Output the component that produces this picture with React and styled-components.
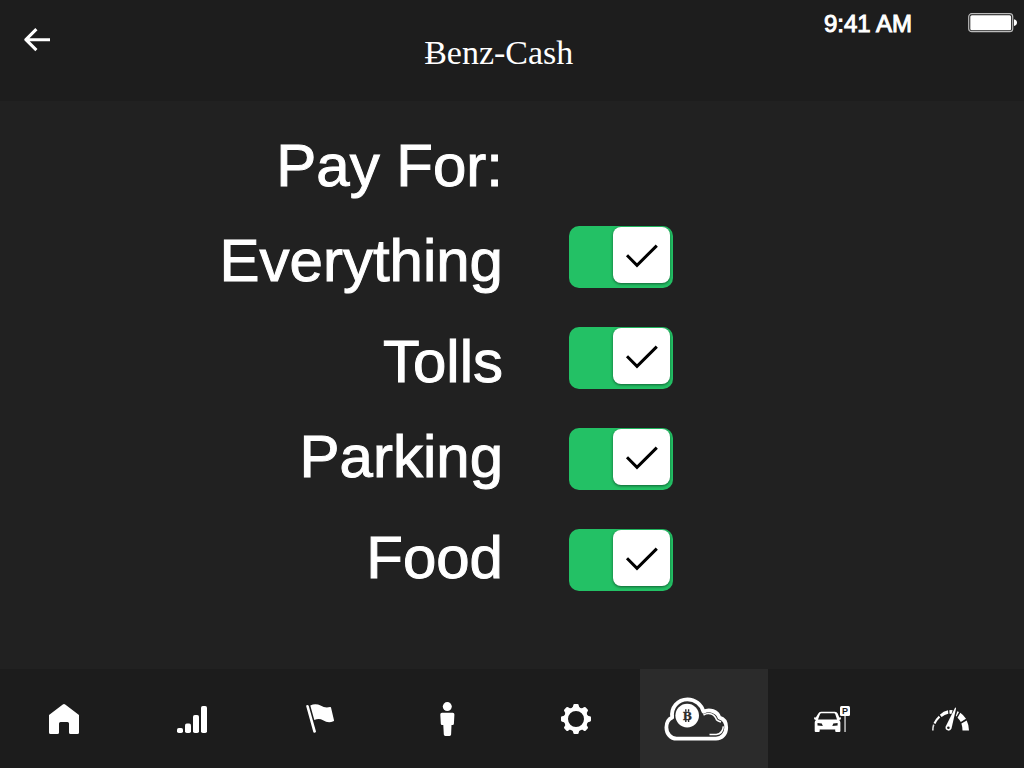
import React from "react";
import styled, { createGlobalStyle } from "styled-components";

const GlobalStyle = createGlobalStyle`
  *, *::before, *::after { box-sizing: border-box; }
  body {
    margin: 0;
    background: #212121;
    color: #fff;
    font-family: "Liberation Sans", Arial, sans-serif;
  }
`;

const Screen = styled.div`
  min-height: 100vh;
  display: flex;
  flex-direction: column;
`;

const Header = styled.header`
  display: grid;
  grid-template-columns: 16fr auto 17fr;
  height: 101px;
  background: #1d1d1d;
`;

const BackButton = styled.button`
  justify-self: start;
  align-self: start;
  margin: 28px 0 0 24px;
  padding: 0;
  border: 0;
  background: none;
  color: inherit;
  cursor: pointer;

  svg { display: block; }
`;

const Title = styled.h1`
  margin: 0;
  padding-top: 34px;
  font: 400 34px/38px "Liberation Serif", "Times New Roman", serif;
`;

const Status = styled.div`
  display: flex;
  justify-content: flex-end;
  align-items: flex-start;
  gap: 56px;
  padding: 10px 7px 0 0;

  svg { display: block; margin-top: 2px; }
`;

const Clock = styled.time`
  font-size: 24px;
  line-height: 28px;
  -webkit-text-stroke: 1px #fff;
  paint-order: stroke;
`;

const Main = styled.main`
  flex: 1;
  display: grid;
  grid-template-columns: 1fr 1fr;
  align-items: start;
`;

const Labels = styled.div`
  display: flex;
  flex-direction: column;
  gap: 6px;
  padding: 17px 9px 0 0;
`;

const LabelGroup = styled.div`
  display: flex;
  flex-direction: column;
  align-items: flex-end;
  font-size: 60px;
  line-height: 95px;
  -webkit-text-stroke: 1px #fff;
`;

const Heading = styled.h2`
  margin: 0;
  font: inherit;
`;

const Switches = styled.div`
  display: flex;
  flex-direction: column;
  align-items: flex-start;
  gap: 39px;
  padding: 125px 0 39px 57px;
`;

const Switch = styled.span`
  position: relative;
  width: 104px;
  height: 62px;
`;

const Knob = styled.span`
  position: absolute;
  top: 1px;
  left: 3px;
  width: 57px;
  height: 56px;
  border-radius: 8px;
  background: #fff;
  box-shadow: 0 1px 3px rgba(0, 0, 0, 0.5);
  pointer-events: none;

  svg { display: block; visibility: hidden; }
`;

const SwitchInput = styled.input`
  appearance: none;
  display: block;
  width: 100%;
  height: 100%;
  margin: 0;
  border-radius: 10px;
  background: #555;
  cursor: pointer;

  &:checked { background: #23c165; }
  &:checked + ${Knob} { left: 44px; }
  &:checked + ${Knob} svg { visibility: visible; }
`;

const TabBar = styled.nav`
  display: grid;
  grid-template-columns: repeat(8, 1fr);
  height: 99px;
  background: #1c1c1c;
`;

const Tab = styled.button`
  display: flex;
  align-items: center;
  justify-content: center;
  padding: 0;
  border: 0;
  background: ${(p) => (p.$active ? "#2b2b2b" : "transparent")};
  color: #fff;
  cursor: pointer;
`;

const ArrowIcon = () => (
  <svg width="27" height="24" viewBox="0 0 27 24" fill="none" stroke="currentColor" strokeWidth="3.1">
    <path d="M12.400 1.200 1.900 11.700l10.500 10.500M2 11.700h24" strokeLinejoin="round" />
  </svg>
);

const BatteryIcon = () => (
  <svg width="49" height="21" viewBox="0 0 49 21" role="img" aria-label="Battery full">
    <rect x="0.7" y="1.7" width="44" height="18" rx="3" fill="none" stroke="#bbb" strokeWidth="1.2" />
    <rect x="2.3" y="3.3" width="40.8" height="15" rx="1.5" fill="#fff" />
    <path d="M46 7.2q3 .8 3 3.4t-3 3.4z" fill="#fff" />
  </svg>
);

const CheckIcon = () => (
  <svg width="57" height="56" viewBox="0 0 57 56" fill="none" stroke="#000" strokeWidth="3">
    <path d="M14 28.200 24 38.300 43.800 18.600" />
  </svg>
);

const HomeIcon = () => (
  <svg width="30" height="30" viewBox="0 0 30 30" fill="currentColor">
    <path d="M13.800.5q1.200-.9 2.400 0L30 11v17.500q0 1.500-1.500 1.500h-7q-1.500 0-1.500-1.500v-9q0-1.500-1.500-1.500h-7q-1.500 0-1.500 1.500v9q0 1.500-1.500 1.500h-7Q0 30 0 28.500V11z" />
  </svg>
);

const SignalIcon = () => (
  <svg width="30" height="29" viewBox="0 -2 30 29" fill="currentColor">
    <rect x="0" y="22" width="6" height="5" rx="1.8" />
    <rect x="8" y="17.600" width="6" height="9.400" rx="1.800" />
    <rect x="16" y="9" width="6" height="18" rx="1.800" />
    <rect x="24" y="0" width="6" height="27" rx="1.800" />
  </svg>
);

const FlagIcon = () => (
  <svg width="28" height="29" viewBox="0 0 28 29" fill="currentColor">
    <path d="M.2 2.200Q0 1.200 1 1T2.700 1.800L10 27.500Q10 28.600 8.700 28.700T7.300 28z" />
    <path d="M4.300 1.400C8-.3 11.500-.1 14.500 1.600 18 3.600 21 3.900 24 3c.8-.2.900.2 1 .6L28 16.200c.1.600-.1.900-.6 1.100-4 1.500-7 .9-10.400-1.100-2.600-1.500-5.200-1.700-8.700-.2z" />
  </svg>
);

const PersonIcon = () => (
  <svg width="16" height="34" viewBox="0 0 16 34" fill="currentColor">
    <circle cx="7.300" cy="4.600" r="4.500" />
    <path d="M2 10.800h10.700q1.800 0 1.700 1.800l-.5 9.200q-.1 1.200-1.200 1.200h-1.200l-.4 9.600q-.1 1.400-1.500 1.400H5.300q-1.400 0-1.500-1.400L3.300 23H2Q.9 23 .8 21.800l-.5-9.200q-.1-1.800 1.700-1.800z" />
  </svg>
);

const GearIcon = () => (
  <svg width="30" height="30" viewBox="-15 -15 30 30" fill="currentColor">
    <circle r="10" fill="none" stroke="currentColor" strokeWidth="4" />
    {[0, 45, 90, 135, 180, 225, 270, 315].map((a) => (
      <path
        key={a}
        transform={`rotate(${a})`}
        d="M-4.400-10.800Q-2.900-11.600-2.700-13.800-2.600-15-1.500-15h3Q2.600-15 2.700-13.800 2.900-11.600 4.400-10.800z"
      />
    ))}
  </svg>
);

const BitcoinCloudIcon = () => (
  <svg width="80" height="44" viewBox="0 0 80 44" fill="none" stroke="currentColor">
    <path
      strokeWidth="3.800"
      strokeLinejoin="round"
      d="M12.500 41.600H52C58 41.600 62.200 36.700 62.200 30.700 62.200 24.700 59 21.500 55.500 20.700 53.500 14.400 45.500 11.500 39.500 14.700 37.500 7.200 31 2.300 23.500 2.300 13.500 2.300 6.800 10.700 8.200 20.400 4 22.200 2.400 26.200 2.400 30.400 2.400 36.700 6.700 41.600 12.500 41.600z"
    />
    <path strokeWidth="1.500" d="M39.500 18C45 14.900 50.500 17 52.500 22.800 53.400 24.100 55 24.300 57 25.100M45.500 37.500H52.300C56.300 37 59 33.700 59.300 29.400" />
    <circle cx="23.200" cy="18.600" r="11.800" fill="currentColor" stroke="none" />
    <path stroke="#2b2b2b" strokeWidth="1.400" d="M21.800 12.300v2.500M24.600 12.300v2.500M21.800 22.500v2.500M24.600 22.500v2.500" />
    <text x="18.700" y="22.900" fill="#2b2b2b" stroke="#2b2b2b" strokeWidth="0.300" fontFamily="DejaVu Serif, serif" fontWeight="700" fontSize="11">B</text>
  </svg>
);

const ParkingIcon = () => (
  <svg width="37" height="26" viewBox="0 0 37 26" fill="currentColor">
    <path
      fillRule="evenodd"
      d="M7 5.800h14q2 0 2.700 1.700L25.300 11.500Q27 10.700 27 12.200T25.200 14q1.200 1 1.200 2.500V25q0 1-1 1h-3.200q-1 0-1-1v-1.500H5.700V25q0 1-1 1H1.700q-1 0-1-1v-8.500Q.7 15 1.900 14 0 13.600 0 12.200t1.800-.7L4.300 7.500Q5 5.800 7 5.800zM7.300 7.300q-.9 0-1.300.9L4 13.500H23L21.300 8.200Q20.900 7.300 20.100 7.300zM3.500 17v2.500l5.300.4-1-2.500zM23.600 17l-4.300.4-1 2.500 5.300-.4z"
    />
    <rect x="26" y="0" width="10" height="10" rx="1.500" />
    <path d="M30.300 10h1.500v16h-1.500z" opacity="0.750" />
    <text x="27.900" y="8.200" fill="#1c1c1c" fontFamily="Liberation Sans, sans-serif" fontWeight="700" fontSize="9">P</text>
  </svg>
);

const GaugeIcon = () => (
  <svg width="56" height="24" viewBox="0 0 56 24" fill="currentColor">
    <path d="M0 23.500Q0 20 1 17.200l1.500.7Q1.500 20.500 1.700 23.500z" opacity="0.850" />
    <path d="M1.500 16Q3.500 11.800 6.800 8.700L8.200 10.500Q5 13.400 3.500 17z" />
    <path d="M7.800 7.800Q11.500 4.200 16 3.300L16.300 6.700Q12.500 7.600 9.600 9.900z" />
    <path d="M17.300 3.200Q19 2.900 20.700 3.200L19.400 6.900 17.600 6.700z" />
    <path d="M25.300 4.200 27 5 24.500 9.500 23.800 9z" />
    <path d="M28.300 5.700Q31.800 8 34 11.800L28.800 15Q27.500 12.500 25.500 10.700z" />
    <path d="M34.700 13.400Q37 18 37 23.500H30.500Q30.500 19.800 29.400 16.500z" />
    <path d="M23.200.6Q24.200.7 24 1.800L19.500 21.500Q18.600 23.900 16.200 23.600 12.900 22.700 13.600 19.800z" />
    <circle cx="16.400" cy="20.800" r="1.300" fill="#1c1c1c" />
  </svg>
);

const switches = ["Everything", "Tolls", "Parking", "Food"];
const labelGroups = [["Tolls", "Parking"], ["Food"]];

const tabs = [
  ["Home", HomeIcon],
  ["Signal", SignalIcon],
  ["Destinations", FlagIcon],
  ["Driver", PersonIcon],
  ["Settings", GearIcon],
  ["Benz-Cash", BitcoinCloudIcon],
  ["Parking", ParkingIcon],
  ["Performance", GaugeIcon],
];

const idFor = (name) => `pay-${name.toLowerCase()}`;

export default function App() {
  return (
    <Screen>
      <GlobalStyle />
      <Header>
        <BackButton type="button" aria-label="Back"><ArrowIcon /></BackButton>
        <Title>Ƀenz-Cash</Title>
        <Status>
          <Clock>9:41 AM</Clock>
          <BatteryIcon />
        </Status>
      </Header>
      <Main>
        <Labels>
          <LabelGroup>
            <Heading>Pay For:</Heading>
            <label htmlFor={idFor("Everything")}>Everything</label>
          </LabelGroup>
          {labelGroups.map((group) => (
            <LabelGroup key={group[0]}>
              {group.map((name) => (
                <label key={name} htmlFor={idFor(name)}>{name}</label>
              ))}
            </LabelGroup>
          ))}
        </Labels>
        <Switches>
          {switches.map((name) => (
            <Switch key={name}>
              <SwitchInput type="checkbox" id={idFor(name)} defaultChecked />
              <Knob><CheckIcon /></Knob>
            </Switch>
          ))}
        </Switches>
      </Main>
      <TabBar aria-label="Main">
        {tabs.map(([name, Icon]) => (
          <Tab
            key={name}
            type="button"
            aria-label={name}
            $active={name === "Benz-Cash"}
            aria-current={name === "Benz-Cash" ? "page" : undefined}
          >
            <Icon />
          </Tab>
        ))}
      </TabBar>
    </Screen>
  );
}
